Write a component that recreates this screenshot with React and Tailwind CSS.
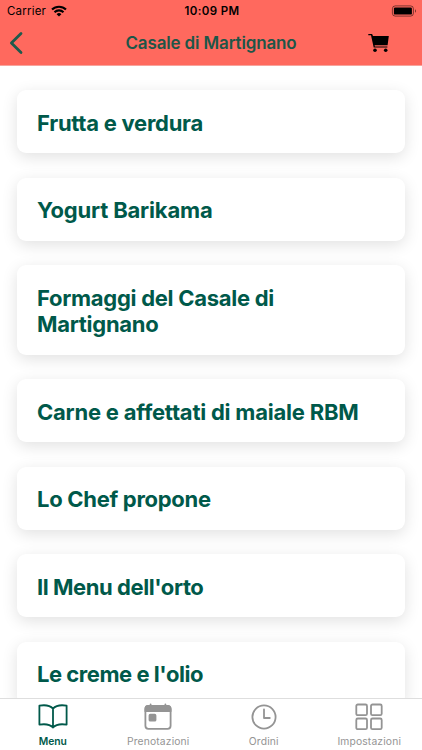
const items = [
  { label: 'Frutta e verdura', track: 'tracking-[-0.26px]' },
  { label: 'Yogurt Barikama', track: 'tracking-[-0.18px]' },
  { label: 'Formaggi del Casale di Martignano', track: 'tracking-[-0.28px]' },
  { label: 'Carne e affettati di maiale RBM', track: 'tracking-[-0.22px]', wide: true },
  { label: 'Lo Chef propone', track: 'tracking-[-0.29px]' },
  { label: "Il Menu dell'orto", track: 'tracking-[-0.43px]' },
  { label: "Le creme e l'olio", track: 'tracking-[-0.46px]' },
];

function StatusBar() {
  return (
    <div className="grid h-[22px] grid-cols-3 items-center pr-[5px] pl-[7px] text-[11.5px] leading-[22px] text-black">
      <div className="flex items-center gap-[5px]">
        <span className="tracking-[0.2px]">Carrier</span>
        <svg className="-mt-px" width="16" height="12" viewBox="0 0 16 12" fill="none" stroke="#000" strokeWidth="2.1">
          <path d="M1 4.6a10 10 0 0 1 14 0" />
          <path d="M3.5 7.2a6.4 6.4 0 0 1 9 0" />
          <path d="M8 11.6 5.6 9.2a3.4 3.4 0 0 1 4.8 0z" fill="#000" stroke="none" />
        </svg>
      </div>
      <span className="text-center font-semibold tracking-[0.4px] whitespace-nowrap">10:09 PM</span>
      <svg className="-mt-px justify-self-end" width="26" height="12" viewBox="0 0 26 12">
        <rect x="1.4" y="0.9" width="21" height="10.2" rx="2.8" fill="none" stroke="#000" strokeOpacity="0.5" />
        <rect x="2.9" y="2.4" width="18" height="7.2" rx="1.2" />
        <path d="M24 4.2v3.6c1.2-.6 1.2-3 0-3.6z" fillOpacity="0.6" />
      </svg>
    </div>
  );
}

function Header() {
  return (
    <header className="h-[66px] shrink-0 border-b border-[#f7a49d] bg-[#ff695e]">
      <StatusBar />
      <div className="grid h-[42px] grid-cols-[60px_1fr_60px] items-center">
        <svg className="ml-[8px]" width="16" height="24" viewBox="0 0 16 24" fill="none" stroke="#1d5a4c" strokeWidth="2.8" strokeLinecap="round" strokeLinejoin="round">
          <path d="M13 2.6 3.4 12l9.600 9.400" />
        </svg>
        <h1 className="text-center text-[17px] leading-[22px] font-semibold tracking-[-0.15px] text-[#1d5648]">
          Casale di Martignano
        </h1>
        <svg className="ml-[6px]" width="22" height="20" viewBox="0 0 22 20">
          <path d="M.3.9h3.8l.9 2h15.800l-1.200 9.400H6.600l.3 1.100h12.500v1.200H5.700L3 2.300H.3z" />
          <circle cx="7" cy="17.200" r="1.800" />
          <circle cx="17.700" cy="17.200" r="1.800" />
        </svg>
      </div>
    </header>
  );
}

function Tab({ label, active, children }) {
  return (
    <div className={`flex flex-col items-center ${active ? 'text-[#00594a]' : 'text-[#949494]'}`}>
      <svg className="mt-[3px]" width="32" height="30" viewBox="0 0 32 30" fill="none" stroke="currentColor" strokeWidth="1.8" strokeLinejoin="round" strokeLinecap="round">
        {children}
      </svg>
      <span className={`mt-[3px] text-[10.3px] leading-[13px] ${active ? 'font-semibold tracking-[0px]' : 'tracking-[0.15px]'}`}>{label}</span>
    </div>
  );
}

export default function App() {
  return (
    <div className="flex h-[750px] w-[422px] flex-col overflow-hidden bg-white font-[Inter,'Liberation_Sans',sans-serif]">
      <Header />
      <main className="flex min-h-0 flex-1 flex-col gap-[24.6px] overflow-hidden px-[16.6px] pt-[24px]">
        {items.map((item) => (
          <section
            key={item.label}
            className={`shrink-0 rounded-[9px] bg-white pt-[19.5px] pb-[17.1px] pl-[20.4px] shadow-[0_4px_16px_rgba(0,0,0,0.12)] ${item.wide ? 'pr-[10px]' : 'pr-[80px]'}`}
          >
            <h2 className={`text-[22px] leading-[26.4px] font-bold text-[#00594a] ${item.track}`}>{item.label}</h2>
          </section>
        ))}
      </main>
      <nav className="grid h-[52px] shrink-0 grid-cols-4 border-t border-[#dedede] bg-white">
        <Tab label="Menu" active>
          <path d="M16 6.7C13 3.4 7 2.9 2.4 3.7V22.6C7 21.9 13 22.2 16 25.5c3-3.3 9-3.6 13.6-2.9V3.7C25 2.9 19 3.4 16 6.7zV25.5" />
        </Tab>
        <Tab label="Prenotazioni">
          <rect x="3.4" y="4" width="25.2" height="22.8" rx="3" />
          <path d="M3.4 9.2V7a3 3 0 0 1 3-3h19.2a3 3 0 0 1 3 3v2.2z" fill="currentColor" />
          <path d="M8.6 2.4v2M23.4 2.4v2" />
          <rect x="7.5" y="12.7" width="6" height="6" rx="0.8" fill="currentColor" />
        </Tab>
        <Tab label="Ordini">
          <circle cx="16" cy="15" r="11.6" />
          <path d="M16 7.4V16h5.8" />
        </Tab>
        <Tab label="Impostazioni">
          <rect x="3.3" y="2.5" width="10.7" height="10.7" rx="1.5" />
          <rect x="18" y="2.5" width="10.7" height="10.7" rx="1.5" />
          <rect x="3.3" y="16.5" width="10.7" height="10.7" rx="1.5" />
          <rect x="18" y="16.5" width="10.7" height="10.7" rx="1.5" />
        </Tab>
      </nav>
    </div>
  );
}
